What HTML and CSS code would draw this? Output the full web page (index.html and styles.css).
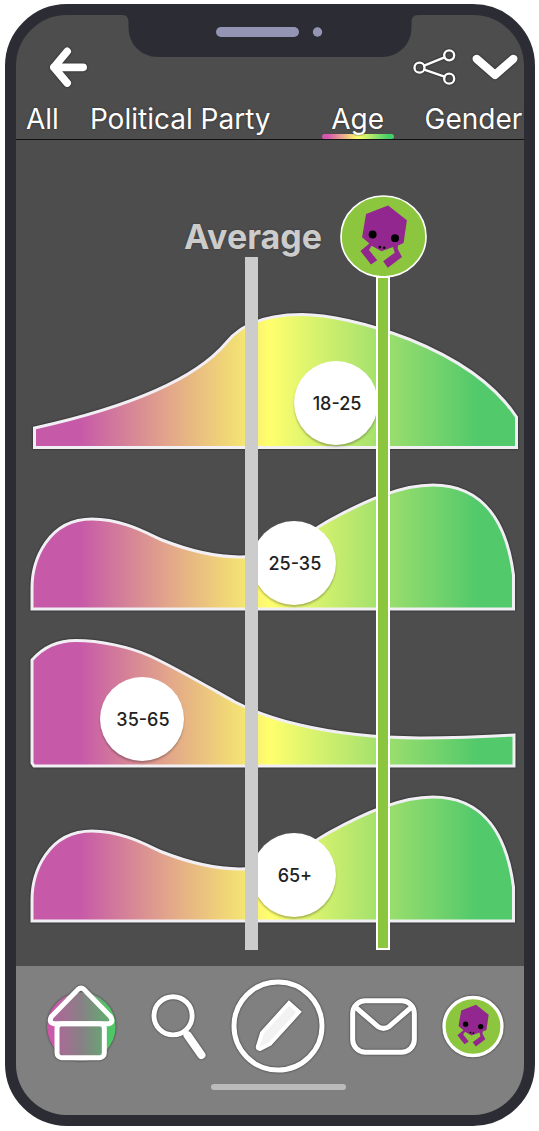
FILE: index.html
```html
<!DOCTYPE html>
<html lang="en">
<head>
<meta charset="utf-8">
<meta name="viewport" content="width=device-width, initial-scale=1">
<title>Age breakdown</title>
<link rel="stylesheet" href="styles.css">
</head>
<body>
<svg class="defs" aria-hidden="true">
  <defs>
    <linearGradient id="spectrum" gradientUnits="userSpaceOnUse" x1="32" x2="516" y1="0" y2="0">
      <stop offset="0.1" stop-color="#c75aa8"/>
      <stop offset="0.28" stop-color="#e2a58a"/>
      <stop offset="0.43" stop-color="#f3e173"/>
      <stop offset="0.49" stop-color="#ffff6e"/>
      <stop offset="0.72" stop-color="#a1e06d"/>
      <stop offset="0.92" stop-color="#52c96b"/>
    </linearGradient>
    <linearGradient id="homeGlow">
      <stop offset="0.1" stop-color="#cb58a8"/>
      <stop offset="0.5" stop-color="#8c8088"/>
      <stop offset="0.9" stop-color="#4fc667"/>
    </linearGradient>
    <symbol id="skull" viewBox="0 0 290 270">
      <path fill="#92278f" d="M91 70 158 44 215 89 205 158 188 165 187 175 200 200 157 233 143 213 178 187 173 170 138 183 108 166 100 179 125 210 106 223 74 182 101 159 79 140Z"/>
      <circle cx="111" cy="132" r="12"/>
      <circle cx="179" cy="143" r="12"/>
      <circle cx="133" cy="170" r="4"/>
      <circle cx="146" cy="172" r="4"/>
    </symbol>
  </defs>
</svg>

<div class="phone">
  <div class="notch" aria-hidden="true">
    <svg class="notch-shape" viewBox="0 0 296 42"><path fill="#2c2c35" d="M0 0C5 0 6.500 3 6.500 8V12C6.500 30 20 42 36 42H260C276 42 289.500 30 289.500 12V8C289.500 3 291 0 296 0Z"/><rect x="94" y="12" width="83" height="10" rx="5" fill="#9494b5"/><circle cx="195.500" cy="17" r="4.700" fill="#9494b5"/></svg>
  </div>

  <header class="header">
    <div class="toolbar">
      <button class="icon-button" type="button" aria-label="Back">
        <svg width="39" height="40" viewBox="146 142 116 120"><path class="line" stroke-width="23" d="M200 155 160 203 200 250M160 203H248"/></svg>
      </button>
      <div class="actions">
        <button class="icon-button" type="button" aria-label="Share">
          <svg width="43" height="36" viewBox="434 148 128 108"><g class="line" stroke-width="7"><circle cx="453" cy="204" r="15"/><circle cx="542" cy="167" r="15"/><circle cx="542" cy="237" r="15"/><path d="M467 198 528 173M467 210 528 231"/></g></svg>
        </button>
        <button class="icon-button" type="button" aria-label="More">
          <svg width="46" height="26" viewBox="608 164 138 77"><path class="line" stroke-width="25" d="M622 178 677 226 732 178"/></svg>
        </button>
      </div>
    </div>
    <nav class="tabs" aria-label="Breakdown">
      <a class="tab" href="#all">All</a>
      <a class="tab" href="#party">Political Party</a>
      <a class="tab tab-active" href="#age" aria-current="page">Age</a>
      <a class="tab" href="#gender">Gender</a>
    </nav>
  </header>

  <main class="chart">
    <div class="legend">
      <span class="average">Average</span>
      <svg class="pin-head" viewBox="12 12 264 252" role="img" aria-label="You"><ellipse cx="144" cy="138" rx="129" ry="123" fill="#8cc63f" stroke="#fff" stroke-width="5"/><use href="#skull" width="290" height="270"/></svg>
    </div>

    <div class="row">
      <svg class="hill" viewBox="16 310 508 142" aria-hidden="true"><path d="M34.500 447.500V428C120 409 193 382 226 343C240 325 265 314.500 302 314.500C350 314.500 470 347 516.500 417V447.500Z"/></svg>
      <span class="bubble at-young">18-25</span>
    </div>
    <div class="row">
      <svg class="hill" viewBox="16 476 508 136" aria-hidden="true"><path d="M32 609V588C32 560 48 519 92 519C124 519 150 535 162 540C190 551 215 557 240 557C280 557 300 537 330 520C365 501 400 485 433 485C485 485 507 525 513.500 575V609Z"/></svg>
      <span class="bubble at-middle">25-35</span>
    </div>
    <div class="row">
      <svg class="hill" viewBox="16 636 508 132" aria-hidden="true"><path d="M32 763V660C45 645 60 640.500 76 640.500C100 640.500 130 647 150 656C180 670 215 691 235 702C262 716 320 737.500 420 738C450 738 480 737 514 735V766H34Z"/></svg>
      <span class="bubble at-left">35-65</span>
    </div>
    <div class="row">
      <svg class="hill" viewBox="16 792 508 132" aria-hidden="true"><path transform="translate(0 312)" d="M32 609V588C32 560 48 519 92 519C124 519 150 535 162 540C190 551 215 557 240 557C280 557 300 537 330 520C365 501 400 485 433 485C485 485 507 525 513.500 575V609Z"/></svg>
      <span class="bubble at-middle">65+</span>
    </div>

    <div class="marker marker-average"></div>
    <div class="marker marker-you"></div>
  </main>

  <footer class="footer">
    <nav class="nav" aria-label="Main">
      <a href="#home" aria-label="Home">
        <svg width="80" height="82" viewBox="138 105 240 246"><circle cx="244" cy="230" r="103" fill="url(#homeGlow)"/><g class="line" stroke-width="15"><path fill="#808080" fill-opacity=".35" d="M233 119Q243 110 253 119L332 200Q342 218 325 221H162Q145 218 154 200Z"/><rect x="171" y="221" width="142" height="102" rx="14" fill="#808080" fill-opacity=".35"/></g></svg>
      </a>
      <a href="#search" aria-label="Search">
        <svg width="55" height="67" viewBox="455 129 167 201"><circle class="line" cx="522" cy="197" r="58" stroke-width="15"/><path class="line" stroke-width="25" d="M566 256 608 316"/></svg>
      </a>
      <a href="#write" aria-label="Write">
        <svg width="94" height="94" viewBox="0 0 94 94"><circle class="line" cx="47" cy="47" r="44" stroke-width="5"/><path d="M58 24 68 33 39 65 29 70Q26 70 27 67L31 54Z" fill="#f2f2f2" stroke="#fff" stroke-width="4"/></svg>
      </a>
      <a href="#mail" aria-label="Messages">
        <svg width="67" height="57" viewBox="240 150 200 170"><g class="line" stroke-width="15"><rect x="248" y="158" width="184" height="154" rx="38"/><path d="M255 176 322 234Q340 247 358 234L425 176"/></g></svg>
      </a>
      <a href="#profile" aria-label="Profile">
        <svg width="62" height="63" viewBox="515 139 186 188"><circle cx="608" cy="233" r="87" fill="#8cc63f" stroke="#fff" stroke-width="10"/><use href="#skull" x="512" y="138" width="193" height="180"/></svg>
      </a>
    </nav>
    <div class="home-indicator"></div>
  </footer>
</div>
</body>
</html>
```

FILE: styles.css
```css
* {
  box-sizing: border-box;
}

body {
  margin: 0;
  padding: 4px 4px 5px 5px;
  min-height: 100vh;
  display: flex;
  background: #fff;
  font-family: Inter, "Open Sans", sans-serif;
}

svg {
  display: block;
}

.defs {
  position: absolute;
  width: 0;
  height: 0;
}

.phone {
  position: relative;
  flex: 1;
  min-width: 0;
  display: flex;
  flex-direction: column;
  overflow: hidden;
  border: 11px solid #2c2c35;
  border-radius: 62px;
  background: #4d4d4d;
}

.notch {
  position: absolute;
  top: 0;
  left: 0;
  right: 0;
  display: flex;
  justify-content: center;
}

.notch-shape {
  width: 296px;
}

.line {
  fill: none;
  stroke: #fff;
  stroke-linecap: round;
  stroke-linejoin: round;
}

.header {
  border-bottom: 1px solid #111;
}

.toolbar {
  display: flex;
  align-items: center;
  justify-content: space-between;
  padding: 32px 6px 17px 33px;
}

.actions {
  display: flex;
  align-items: center;
  gap: 16px;
}

.icon-button {
  padding: 0;
  border: 0;
  background: none;
}

.icon-button svg,
.nav svg {
  filter: drop-shadow(0 0 1px rgba(0, 0, 0, 0.6));
}

.tabs {
  display: flex;
  gap: 31px;
  padding-left: 10px;
}

.tab {
  flex: none;
  color: #fff;
  font-size: 28px;
  font-weight: 400;
  line-height: 30px;
  text-decoration: none;
  text-shadow: 0 0 2px #222;
}

.tab-active {
  margin-left: 20px;
  text-align: center;
}

.tab-active::after {
  content: "";
  display: block;
  width: 72px;
  height: 5px;
  border-radius: 3px;
  background: linear-gradient(90deg, #d457ae 8%, #ffff6e 50%, #45cf68 92%);
}

.chart {
  position: relative;
  flex: 1;
  display: flex;
  flex-direction: column;
  gap: 24px;
  padding-bottom: 41px;
}

.legend {
  display: grid;
  grid-template-columns: 306fr 18fr 87fr 97fr;
  align-items: center;
  padding: 55px 0 8px;
}

.average {
  justify-self: end;
  color: #ccc;
  font-size: 34px;
  font-weight: 700;
  text-shadow: 0 0 2px #333;
}

.pin-head {
  grid-column: 3;
  width: 100%;
}

.row {
  position: relative;
}

.hill {
  width: 100%;
  fill: url(#spectrum);
  stroke: #f1eff4;
  stroke-width: 3px;
  filter: drop-shadow(0 0 1px rgba(0, 0, 0, 0.6));
}

.bubble {
  position: absolute;
  bottom: 7px;
  width: 84px;
  height: 84px;
  margin-left: -42px;
  padding-left: 2px;
  display: flex;
  align-items: center;
  justify-content: center;
  border-radius: 50%;
  background: #fff;
  box-shadow: 0 2px 2px rgba(0, 0, 0, 0.25);
  color: #222;
  font-size: 18px;
  font-weight: 500;
}

.at-left {
  left: 24.8%;
}

.at-middle {
  left: 54.7%;
}

.at-young {
  left: 63%;
}

.marker {
  position: absolute;
  bottom: 16px;
}

.marker-average {
  top: 117px;
  left: 45%;
  width: 13px;
  background: #ccc;
}

.marker-you {
  top: 136px;
  left: 70.9%;
  width: 14px;
  border: 2px solid #fff;
  background: #8cc63f;
}

.footer {
  padding: 13px 20px 25px 30px;
  background: #808080;
}

.nav {
  display: flex;
  align-items: center;
  justify-content: space-between;
}

.home-indicator {
  width: 135px;
  height: 6px;
  margin: 11px 0 0 36%;
  border-radius: 3px;
  background: #bbb;
}
```
